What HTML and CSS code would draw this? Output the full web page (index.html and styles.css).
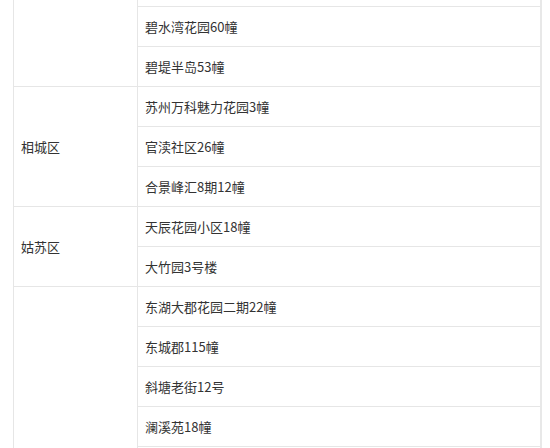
FILE: index.html
```html
<!DOCTYPE html>
<html lang="zh">
<head>
<meta charset="utf-8">
<link rel="stylesheet" href="styles.css">
</head>
<body>
<div class="wrap">
<table class="list">
  <tbody>
    <tr><td class="district" rowspan="3"></td><td class="place"></td></tr>
    <tr><td class="place">碧水湾花园60幢</td></tr>
    <tr><td class="place">碧堤半岛53幢</td></tr>
    <tr><td class="district" rowspan="3">相城区</td><td class="place">苏州万科魅力花园3幢</td></tr>
    <tr><td class="place">官渎社区26幢</td></tr>
    <tr><td class="place">合景峰汇8期12幢</td></tr>
    <tr><td class="district" rowspan="2">姑苏区</td><td class="place">天辰花园小区18幢</td></tr>
    <tr><td class="place">大竹园3号楼</td></tr>
    <tr><td class="district" rowspan="6"></td><td class="place">东湖大郡花园二期22幢</td></tr>
    <tr><td class="place">东城郡115幢</td></tr>
    <tr><td class="place">斜塘老街12号</td></tr>
    <tr><td class="place">澜溪苑18幢</td></tr>
    <tr><td class="place"></td></tr>
    <tr><td class="place"></td></tr>
  </tbody>
</table>
</div>
</body>
</html>
```
FILE: styles.css
```css
html, body {
  margin: 0;
  padding: 0;
  background: #fff;
}
.wrap {
  padding-left: 13px;
  margin-top: -34px;
}
.list {
  border-collapse: collapse;
  width: 529px;
  table-layout: fixed;
  border-right: 2px solid #e8e8e8;
  font-family: "Noto Sans CJK SC", "Microsoft YaHei", sans-serif;
  font-size: 13px;
  color: #333;
}
.list td {
  border: 1px solid #e6e6e6;
  padding: 0 7px;
  line-height: 39px;
  height: 39px;
  white-space: nowrap;
  vertical-align: middle;
}
.list .district {
  width: 109px;
}
```
